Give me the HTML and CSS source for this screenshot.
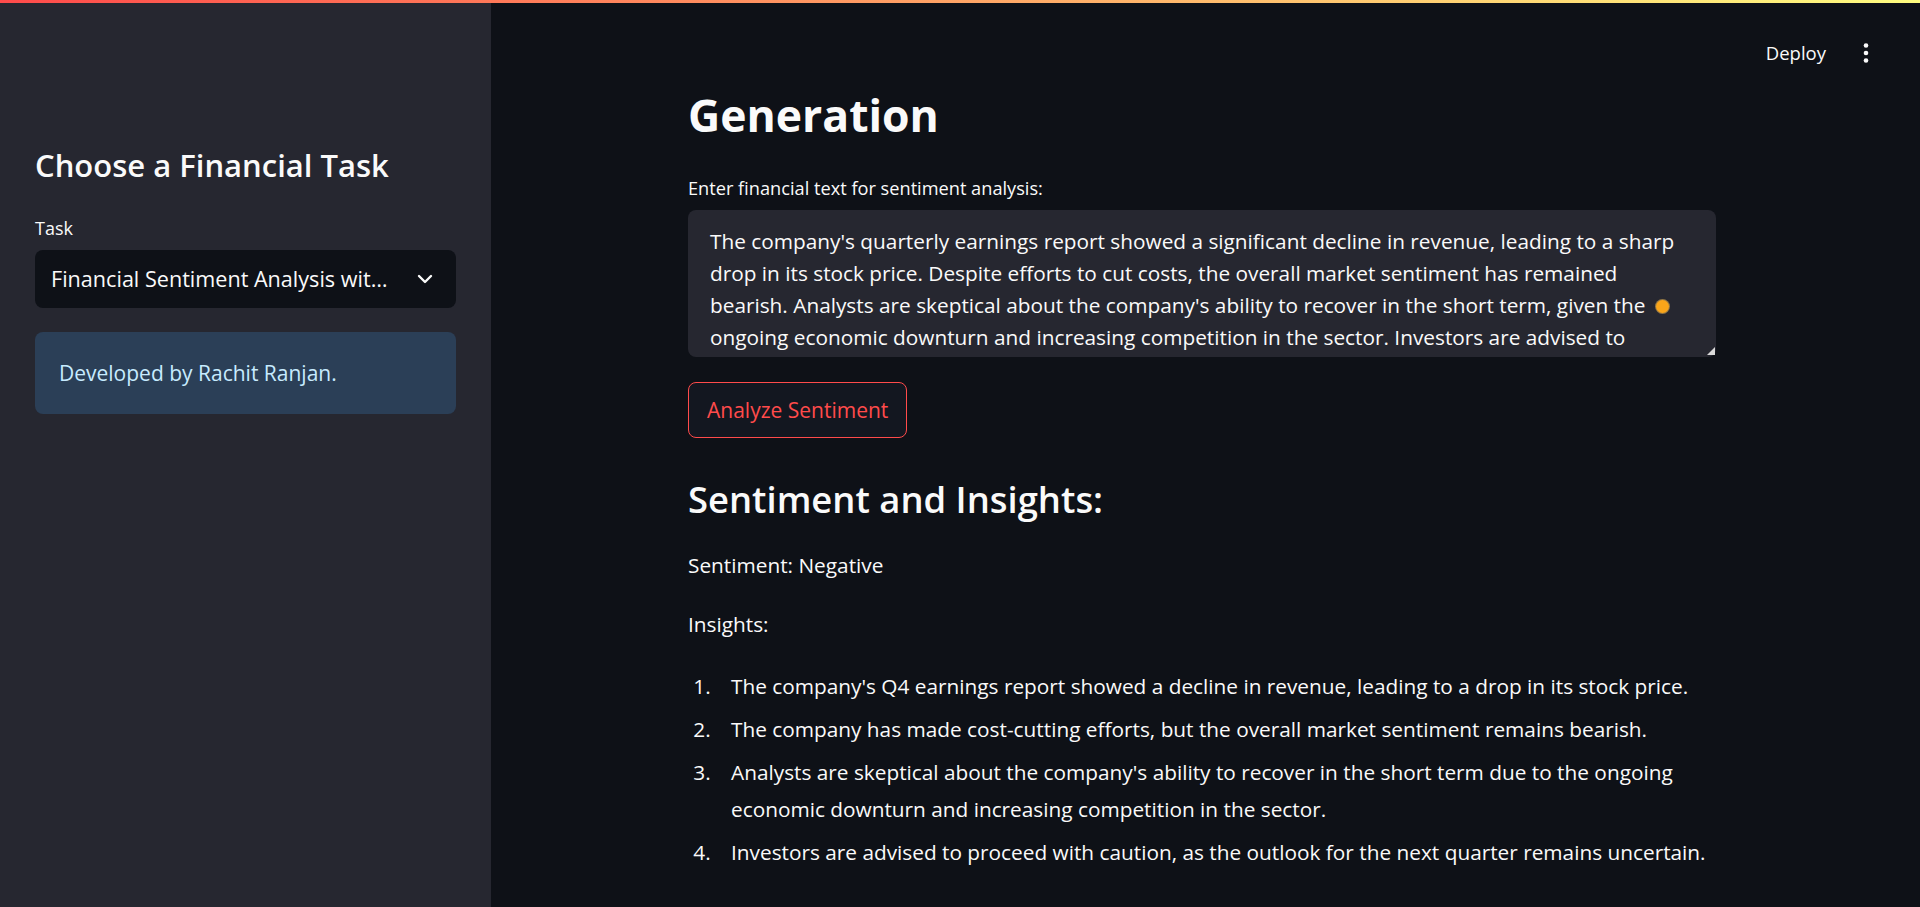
FILE: index.html
```html
<!DOCTYPE html>
<html lang="en">
<head>
<meta charset="utf-8">
<title>Generation</title>
<link rel="stylesheet" href="styles.css">
</head>
<body>
<div class="decoration"></div>
<div class="app">
  <aside class="sidebar">
    <h2 class="sidebar-title">Choose a Financial Task</h2>
    <div class="field-label">Task</div>
    <div class="select">
      <span class="select-value">Financial Sentiment Analysis wit…</span>
      <svg class="chevron" width="16" height="10" viewBox="0 0 16 10"><path d="M2 2 L8 8 L14 2" fill="none" stroke="#fafafa" stroke-width="2.4" stroke-linecap="round" stroke-linejoin="round"/></svg>
    </div>
    <div class="info">Developed by Rachit Ranjan.</div>
  </aside>
  <main class="main">
    <header class="toolbar">
      <span class="deploy">Deploy</span>
      <svg class="kebab" width="10" height="24" viewBox="0 0 10 24"><circle cx="5" cy="4.5" r="2.3" fill="#fafafa"/><circle cx="5" cy="12" r="2.3" fill="#fafafa"/><circle cx="5" cy="19.5" r="2.3" fill="#fafafa"/></svg>
    </header>
    <section class="block">
      <h1 class="title">Generation</h1>
      <label class="input-label" for="txt">Enter financial text for sentiment analysis:</label>
      <div class="textarea-wrap">
        <textarea id="txt" class="textarea" wrap="off" readonly>The company's quarterly earnings report showed a significant decline in revenue, leading to a sharp
drop in its stock price. Despite efforts to cut costs, the overall market sentiment has remained
bearish. Analysts are skeptical about the company's ability to recover in the short term, given the
ongoing economic downturn and increasing competition in the sector. Investors are advised to
proceed with caution, as the outlook for the next quarter remains uncertain.</textarea>
        <span class="ext-dot"></span>
        <span class="resize-grip"></span>
      </div>
      <button class="btn" type="button">Analyze Sentiment</button>
      <h3 class="subtitle">Sentiment and Insights:</h3>
      <p class="para first">Sentiment: Negative</p>
      <p class="para">Insights:</p>
      <ol class="insights">
        <li>The company's Q4 earnings report showed a decline in revenue, leading to a drop in its stock price.</li>
        <li>The company has made cost-cutting efforts, but the overall market sentiment remains bearish.</li>
        <li>Analysts are skeptical about the company's ability to recover in the short term due to the ongoing economic downturn and increasing competition in the sector.</li>
        <li>Investors are advised to proceed with caution, as the outlook for the next quarter remains uncertain.</li>
      </ol>
    </section>
  </main>
</div>
</body>
</html>
```

FILE: styles.css
```css
* { box-sizing: border-box; }

html, body {
  margin: 0;
  padding: 0;
  height: 100%;
  overflow: hidden;
}

body {
  background: #0e1117;
  color: #fafafa;
  font-family: "Open Sans", "Noto Sans", sans-serif;
  font-size: 20.8px;
}

.decoration {
  height: 3px;
  background: linear-gradient(90deg, #ff4b4b, #fffd80);
}

.app {
  display: flex;
  height: 904px;
}

/* Sidebar */
.sidebar {
  width: 491px;
  flex: 0 0 491px;
  background: #262730;
  padding: 143px 35px 0 35px;
}

.sidebar-title {
  margin: 0;
  font-size: 31px;
  line-height: 38px;
  font-weight: 600;
  color: #fafafa;
}

.field-label {
  margin-top: 33px;
  font-size: 18px;
  line-height: 22px;
}

.select {
  margin-top: 11px;
  height: 58px;
  background: #0e1117;
  border-radius: 8px;
  display: flex;
  align-items: center;
  justify-content: space-between;
  padding: 0 23px 0 16px;
}

.select-value {
  font-size: 21.6px;
  line-height: 28px;
  white-space: nowrap;
}

.chevron { display: block; }

.info {
  margin-top: 24px;
  height: 82px;
  border-radius: 8px;
  background: #2b3f57;
  color: #c7ebff;
  padding: 27px 24px;
  font-size: 21px;
  line-height: 28px;
}

/* Main */
.main {
  flex: 1 1 auto;
  display: flex;
  flex-direction: column;
}

.toolbar {
  height: 80px;
  padding: 20px 49px 0 0;
  display: flex;
  align-items: center;
  justify-content: flex-end;
  gap: 35px;
}

.deploy {
  font-size: 18.5px;
  line-height: 22px;
}

.kebab { display: block; }

.block {
  width: 1028px;
  margin-left: 197px;
}

.title {
  margin: 4px 0 0 0;
  font-size: 44.5px;
  line-height: 56px;
  font-weight: 700;
}

.input-label {
  display: block;
  margin-top: 34px;
  font-size: 18.2px;
  line-height: 22px;
}

.textarea-wrap {
  position: relative;
  margin-top: 11px;
  height: 147px;
}

.textarea {
  display: block;
  width: 100%;
  height: 100%;
  margin: 0;
  border: none;
  outline: none;
  resize: none;
  overflow: hidden;
  white-space: pre;
  background: #262730;
  color: #fafafa;
  border-radius: 8px;
  padding: 15px 22px;
  font-family: inherit;
  font-size: 20.8px;
  line-height: 32px;
}

.ext-dot {
  position: absolute;
  left: 968px;
  top: 90px;
  width: 13px;
  height: 13px;
  border-radius: 50%;
  background: #f9a51a;
  box-shadow: 0 0 0 1px rgba(255, 200, 90, 0.5);
}

.resize-grip {
  position: absolute;
  right: 1px;
  bottom: 2px;
  width: 0;
  height: 0;
  border-left: 8px solid transparent;
  border-bottom: 8px solid #d9d9d9;
}

.btn {
  display: block;
  margin-top: 25px;
  height: 56px;
  padding: 0 18px;
  background: #131720;
  border: 1px solid #ff4b4b;
  border-radius: 8px;
  color: #ff4b4b;
  font-family: inherit;
  font-size: 21px;
  line-height: 28px;
}

.subtitle {
  margin: 40px 0 0 0;
  font-size: 36.4px;
  line-height: 42px;
  font-weight: 600;
}

.para {
  margin: 22px 0 0 0;
  font-size: 20.8px;
  line-height: 37px;
}

.para.first { margin-top: 27px; }

.insights {
  margin: 25px 0 0 0;
  padding-left: 28px;
  font-size: 20.8px;
  line-height: 37px;
}

.insights li {
  margin-bottom: 6px;
  padding-left: 15px;
}
```
